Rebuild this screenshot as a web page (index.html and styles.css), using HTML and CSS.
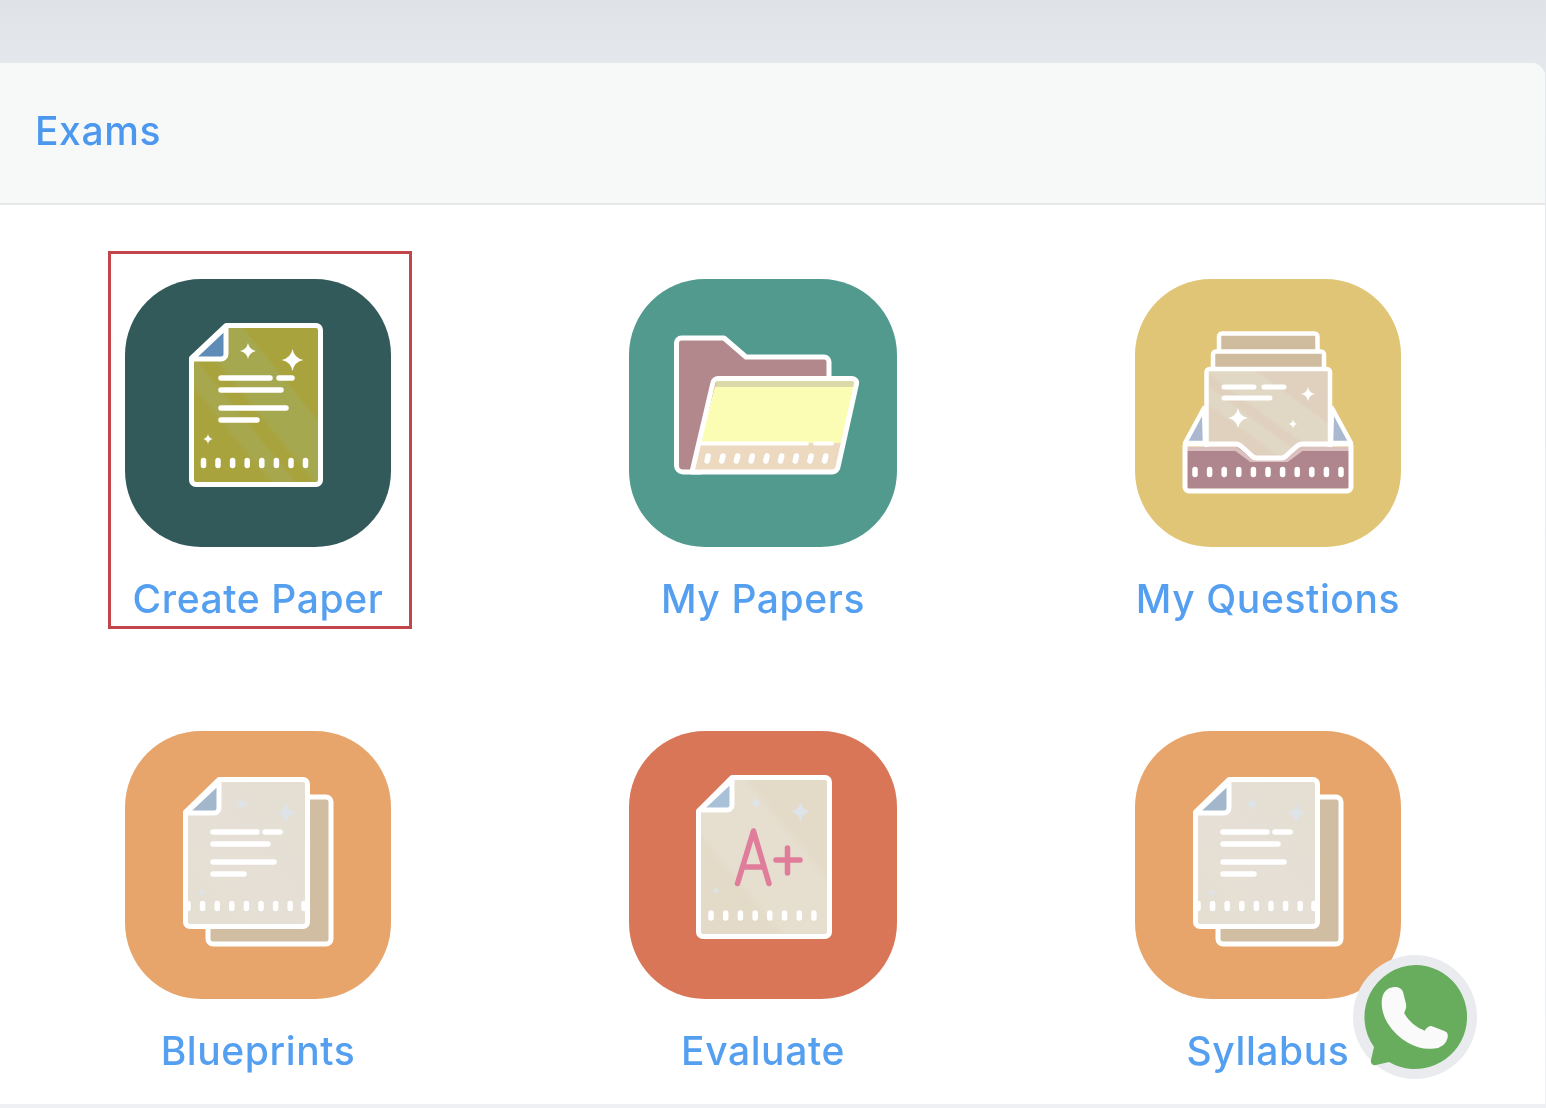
FILE: index.html
```html
<!DOCTYPE html>
<html lang="en">
<head>
<meta charset="utf-8">
<title>Exams</title>
<link rel="stylesheet" href="styles.css">
</head>
<body>
<svg class="defs" aria-hidden="true">
  <defs>
    <path id="sp" d="M0-1Q.16-.16 1 0Q.16.16 0 1Q-.16.16-1 0Q-.16-.16 0-1Z"/>
    <linearGradient id="g-olive" x1="0" y1="1" x2="1" y2="0">
      <stop offset=".3" stop-color="#a9a33d"/><stop offset=".33" stop-color="#a7a74e"/><stop offset=".4" stop-color="#a7a74e"/><stop offset=".42" stop-color="#a9a33d"/><stop offset=".47" stop-color="#a9a33d"/><stop offset=".5" stop-color="#a6a84f"/><stop offset=".68" stop-color="#a6a84f"/><stop offset=".7" stop-color="#a9a33d"/>
    </linearGradient>
    <linearGradient id="g-sand" x1="0" y1="1" x2="1" y2="0">
      <stop offset=".3" stop-color="#e0d1bf"/><stop offset=".33" stop-color="#e0d8c5"/><stop offset=".4" stop-color="#e0d8c5"/><stop offset=".42" stop-color="#e0d1bf"/><stop offset=".47" stop-color="#e0d1bf"/><stop offset=".5" stop-color="#e0d8c5"/><stop offset=".68" stop-color="#e0d8c5"/><stop offset=".7" stop-color="#e0d1bf"/>
    </linearGradient>
    <linearGradient id="g-grey" x1="0" y1="1" x2="1" y2="0">
      <stop offset="0" stop-color="#e5dfd2"/><stop offset=".5" stop-color="#e5dfd6"/><stop offset="1" stop-color="#e4dfd1"/>
    </linearGradient>
    <linearGradient id="g-cream" x1="0" y1="1" x2="1" y2="0">
      <stop offset=".3" stop-color="#e3dac8"/><stop offset=".35" stop-color="#e6decf"/><stop offset=".65" stop-color="#e6decf"/><stop offset=".7" stop-color="#e3dac8"/>
    </linearGradient>
    <clipPath id="front-clip"><path d="M717 379H856L835 472H692Z"/></clipPath>
  </defs>
</svg>

<main class="card">
  <header class="card-head"><h1 class="card-title">Exams</h1></header>
  <section class="grid">

    <a class="item selected">
      <span class="tile tile-dark">
        <svg class="ico" viewBox="125 279 266 268">
          <path d="M226 325.500H316a4.500 4.500 0 0 1 4.500 4.500V480a4.500 4.500 0 0 1-4.500 4.500H196a4.500 4.500 0 0 1-4.500-4.500V358Z" fill="url(#g-olive)" stroke="#fff" stroke-width="5" stroke-linejoin="round"/>
          <path d="M226 327V354a5 5 0 0 1-5 5H192Z" fill="#5f8bb9" stroke="#fff" stroke-width="5" stroke-linejoin="round"/>
          <path d="M221 378H270M279 378H292M221 390H281M221 408H286M221 420H257" class="ln"/>
          <use href="#sp" class="sp" transform="translate(248 351) scale(8)"/>
          <use href="#sp" class="sp" transform="translate(292.500 360) scale(11)"/>
          <use href="#sp" class="sp" transform="translate(208 439) scale(5)"/>
          <path d="M203.500 460.500v5M218 460.500v5M232.600 460.500v5M247.200 460.500v5M261.800 460.500v5M276.400 460.500v5M291 460.500v5M305.500 460.500v5" class="dots"/>
        </svg>
      </span>
      <span class="label">Create Paper</span>
    </a>

    <a class="item">
      <span class="tile tile-wide tile-teal">
        <svg class="ico" viewBox="629 279 268 268">
          <path d="M676.500 343a5 5 0 0 1 5-5H724L746 357H824a5 5 0 0 1 5 5V400L700 472H683a6.500 6.500 0 0 1-6.500-6.500Z" fill="#b2888c" stroke="#fff" stroke-width="5" stroke-linejoin="round"/>
          <g clip-path="url(#front-clip)">
            <rect x="690" y="379" width="170" height="8" fill="#dcd9a9"/>
            <rect x="690" y="387" width="170" height="56" fill="#fbfdb4"/>
            <rect x="690" y="443" width="170" height="30" fill="#edd9c0"/>
          </g>
          <path d="M718 378.500H852a4.500 4.500 0 0 1 4.500 5.500L838 467a6 6 0 0 1-6 5H692L713 382.500a5 5 0 0 1 5-4Z" fill="none" stroke="#fff" stroke-width="5" stroke-linejoin="round"/>
          <path d="M702 443.500H807M815 443.500H832" class="ln ln-thin"/>
          <path d="M707 461l1.200-5M721.700 461l1.200-5M736.400 461l1.200-5M751.100 461l1.200-5M765.800 461l1.200-5M780.500 461l1.200-5M795.200 461l1.200-5M809.900 461l1.200-5M824.600 461l1.200-5" class="dots"/>
        </svg>
      </span>
      <span class="label">My Papers</span>
    </a>

    <a class="item">
      <span class="tile tile-gold">
        <svg class="ico" viewBox="1135 279 266 268">
          <path d="M1204 408L1185 443H1205Z" fill="#aab9d0" stroke="#fff" stroke-width="4.500" stroke-linejoin="round"/>
          <path d="M1332 408L1351 443H1331Z" fill="#aab9d0" stroke="#fff" stroke-width="4.500" stroke-linejoin="round"/>
          <rect x="1219" y="333.500" width="98.500" height="22" rx="3" fill="#cfbc9f" stroke="#fff" stroke-width="4.500"/>
          <rect x="1213" y="351.500" width="111" height="20" rx="3" fill="#cfbc9f" stroke="#fff" stroke-width="4.500"/>
          <path d="M1206.500 372a3 3 0 0 1 3-3H1327a3 3 0 0 1 3 3V460H1206.500Z" fill="url(#g-sand)" stroke="#fff" stroke-width="4.500"/>
          <path d="M1224 387H1254M1264 387H1284M1224 398H1270" class="ln ln-mid"/>
          <use href="#sp" class="sp" transform="translate(1238 418) scale(10)"/>
          <use href="#sp" class="sp" transform="translate(1308 394) scale(7)"/>
          <use href="#sp" class="sp" transform="translate(1293 424) scale(4.500)"/>
          <path d="M1185 447V487a4 4 0 0 0 4 4H1347a4 4 0 0 0 4-4V447H1302L1286 458H1252L1237 447Z" fill="#b0868e"/>
          <path d="M1187 449H1236L1251 460H1287L1302 449H1349" fill="none" stroke="#dcc0bf" stroke-width="4"/>
          <path d="M1185 446a2 2 0 0 1 2-2H1236a8 8 0 0 1 5 2L1252 456a6 6 0 0 0 4 2H1282a6 6 0 0 0 4-2L1297 446a8 8 0 0 1 5-2H1349a2 2 0 0 1 2 2V487a4 4 0 0 1-4 4H1189a4 4 0 0 1-4-4Z" fill="none" stroke="#fff" stroke-width="5" stroke-linejoin="round"/>
          <path d="M1195 469.500v5M1209.600 469.500v5M1224.200 469.500v5M1238.800 469.500v5M1253.400 469.500v5M1268 469.500v5M1282.600 469.500v5M1297.200 469.500v5M1311.800 469.500v5M1326.400 469.500v5M1341 469.500v5" class="dots"/>
        </svg>
      </span>
      <span class="label">My Questions</span>
    </a>

    <a class="item">
      <span class="tile tile-orange">
        <svg class="ico" viewBox="125 731 266 268">
          <g id="stack">
            <rect x="208" y="797" width="123" height="147" rx="5" fill="#d1bda2" stroke="#fff" stroke-width="5"/>
            <path d="M219 779.500H303a4.500 4.500 0 0 1 4.500 4.500V922a4.500 4.500 0 0 1-4.500 4.500H190a4.500 4.500 0 0 1-4.500-4.500V812Z" fill="url(#g-grey)" stroke="#fff" stroke-width="5" stroke-linejoin="round"/>
            <path d="M219 782V808a5 5 0 0 1-5 5H186Z" fill="#a2b6cc" stroke="#fff" stroke-width="5" stroke-linejoin="round"/>
            <path d="M213 832H257M265 832H280M213 844H268M213 862H274M213 874H244" class="ln"/>
            <use href="#sp" class="sp-soft" transform="translate(242 804) scale(6.500)"/>
            <use href="#sp" class="sp-soft" transform="translate(286 813) scale(10)"/>
            <use href="#sp" class="sp-soft" transform="translate(202 893) scale(4.500)"/>
            <path d="M188 903.500v5M202.600 903.500v5M217.200 903.500v5M231.800 903.500v5M246.400 903.500v5M261 903.500v5M275.600 903.500v5M290.200 903.500v5M304 903.500v5" class="dots"/>
          </g>
        </svg>
      </span>
      <span class="label">Blueprints</span>
    </a>

    <a class="item">
      <span class="tile tile-wide tile-red">
        <svg class="ico" viewBox="629 731 268 268">
          <path d="M732 777.500H825a4.500 4.500 0 0 1 4.500 4.500V932a4.500 4.500 0 0 1-4.500 4.500H703a4.500 4.500 0 0 1-4.500-4.500V811Z" fill="url(#g-cream)" stroke="#fff" stroke-width="5" stroke-linejoin="round"/>
          <path d="M732 780V805a5 5 0 0 1-5 5H700Z" fill="#a9c0d9" stroke="#fff" stroke-width="5" stroke-linejoin="round"/>
          <use href="#sp" class="sp-soft" transform="translate(756 803) scale(6.500)"/>
          <use href="#sp" class="sp-soft" transform="translate(800.500 811.500) scale(10)"/>
          <use href="#sp" class="sp-soft" transform="translate(716 890.500) scale(4.500)"/>
          <path d="M737.500 883.500L753.500 831L769 883.500M743 867H764M776 860H800M787.500 848V873" fill="none" stroke="#df7d9b" stroke-width="5.500" stroke-linecap="round" stroke-linejoin="round"/>
          <path d="M711 913v5M725.700 913v5M740.400 913v5M755.100 913v5M769.800 913v5M784.500 913v5M799.200 913v5M813.900 913v5" class="dots"/>
        </svg>
      </span>
      <span class="label">Evaluate</span>
    </a>

    <a class="item">
      <span class="tile tile-orange">
        <svg class="ico" viewBox="125 731 266 268"><use href="#stack"/></svg>
      </span>
      <span class="label">Syllabus</span>
    </a>

  </section>
</main>

<a class="whatsapp" aria-label="WhatsApp">
  <svg viewBox="1353 955 124 124">
    <circle cx="1415" cy="1017" r="62" fill="#e9ebee"/>
    <path d="M1415 965a52 52 0 1 1-26 97L1376 1065a4 4 0 0 1-5-5L1374 1047A52 52 0 0 1 1415 965Z" fill="#68ac5e"/>
    <path d="M1390 989C1396 987 1400 988 1402 992L1405 1004C1406 1008 1404 1011 1403 1013C1407 1021 1415 1028 1425 1032C1427 1029 1428 1027 1431 1027L1444 1032C1447 1033 1447 1036 1446.500 1038C1445 1044 1440 1047 1434 1047.500C1416 1050 1398 1038 1388 1022C1383 1013 1382 1006 1383 999C1383.500 994 1386 991 1390 989Z" fill="#fafafa" stroke="#fafafa" stroke-width="2" stroke-linejoin="round"/>
  </svg>
</a>
</body>
</html>
```

FILE: styles.css
```css
* { box-sizing: border-box; }

html, body {
  margin: 0;
  height: 1108px;
  overflow: hidden;
}

body {
  position: relative;
  padding-top: 63px;
  background: linear-gradient(#dfe3e7 0, #e4e8ec 60px, #eef0f3 100%);
  font-family: Inter, "Noto Sans", sans-serif;
}

.defs {
  position: absolute;
  width: 0;
  height: 0;
}

.card {
  height: 1041px;
  margin-right: 1px;
  background: #fff;
  border-radius: 0 14px 0 0;
  overflow: hidden;
}

.card-head {
  height: 142px;
  padding: 0 0 6px 35px;
  display: flex;
  align-items: center;
  background: #f7f9f9;
  border-bottom: 2px solid #e6e8e9;
}

.card-title {
  margin: 0;
  font-size: 39px;
  font-weight: 500;
  letter-spacing: .6px;
  color: #4c98ee;
  filter: blur(.5px);
}

.grid {
  display: grid;
  grid-template-columns: repeat(3, 505px);
  row-gap: 110px;
  padding: 74px 0 0 5.5px;
}

.item {
  position: relative;
  justify-self: center;
  display: flex;
  flex-direction: column;
  align-items: center;
  width: 266px;
}

.selected::after {
  content: "";
  position: absolute;
  top: -28px;
  left: -17px;
  right: -21px;
  bottom: -8px;
  border: 3px solid #c2454a;
}

.tile {
  display: block;
  width: 266px;
  height: 268px;
  border-radius: 76px;
  overflow: hidden;
}

.tile-wide { width: 268px; flex: none; }
.tile-dark { background: #325a5a; }
.tile-teal { background: #519a8d; }
.tile-gold { background: #e1c577; }
.tile-orange { background: #e7a56b; }
.tile-red { background: #d97657; }

.ico {
  display: block;
  width: 100%;
  height: 100%;
  filter: blur(.7px);
}

.ln {
  fill: none;
  stroke: #fff;
  stroke-width: 5.500;
  stroke-linecap: round;
}

.ln-mid { stroke-width: 5; }
.ln-thin { stroke-width: 4; }

.dots {
  fill: none;
  stroke: #fff;
  stroke-width: 5.500;
  stroke-linecap: round;
}

.sp { fill: #fff; }
.sp-soft { fill: #dde3e7; }

.label {
  margin-top: 30px;
  font-size: 39px;
  font-weight: 500;
  line-height: 44px;
  white-space: nowrap;
  letter-spacing: .6px;
  color: #559ff0;
  filter: blur(.5px);
}

.whatsapp {
  position: absolute;
  left: 1353px;
  top: 955px;
  width: 124px;
  height: 124px;
}

.whatsapp svg {
  display: block;
  width: 100%;
  height: 100%;
  filter: blur(.5px);
}
```
